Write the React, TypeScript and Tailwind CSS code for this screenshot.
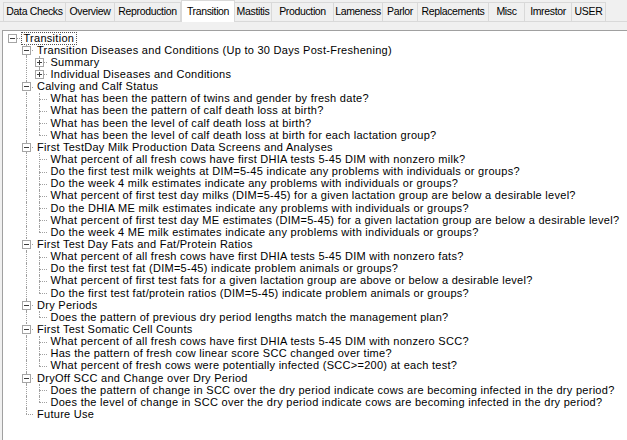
import React from "react";

type Node = {
  label: string;
  collapsed?: boolean;
  children?: Node[];
};

// tab label + measured width in the strip
const tabs: [string, string][] = [
  ["Data Checks", "w-[63px]"],
  ["Overview", "w-[49px]"],
  ["Reproduction", "w-[66px]"],
  ["Transition", "w-[54px]"],
  ["Mastitis", "w-[37px]"],
  ["Production", "w-[62px]"],
  ["Lameness", "w-[49px]"],
  ["Parlor", "w-[35px]"],
  ["Replacements", "w-[71px]"],
  ["Misc", "w-[36px]"],
  ["Imrestor", "w-[47px]"],
  ["USER", "w-[34px]"],
];

const tree: Node = {
  label: "Transition",
  children: [
    {
      label: "Transition Diseases and Conditions (Up to 30 Days Post-Freshening)",
      children: [
        { label: "Summary", collapsed: true, children: [] },
        { label: "Individual Diseases and Conditions", collapsed: true, children: [] },
      ],
    },
    {
      label: "Calving and Calf Status",
      children: [
        { label: "What has been the pattern of twins and gender by fresh date?" },
        { label: "What has been the pattern of calf death loss at birth?" },
        { label: "What has been the level of calf death loss at birth?" },
        { label: "What has been the level of calf death loss at birth for each lactation group?" },
      ],
    },
    {
      label: "First TestDay Milk Production Data Screens and Analyses",
      children: [
        { label: "What percent of all fresh cows have first DHIA tests 5-45 DIM with nonzero milk?" },
        { label: "Do the first test milk weights at DIM=5-45 indicate any problems with individuals or groups?" },
        { label: "Do the week 4 milk estimates indicate any problems with individuals or groups?" },
        { label: "What percent of first test day milks (DIM=5-45) for a given lactation group are below a desirable level?" },
        { label: "Do the DHIA ME milk estimates indicate any problems with individuals or groups?" },
        { label: "What percent of first test day ME estimates (DIM=5-45) for a given lactation group are below a desirable level?" },
        { label: "Do the week 4 ME milk estimates indicate any problems with individuals or groups?" },
      ],
    },
    {
      label: "First Test Day Fats and Fat/Protein Ratios",
      children: [
        { label: "What percent of all fresh cows have first DHIA tests 5-45 DIM with nonzero fats?" },
        { label: "Do the first test fat (DIM=5-45) indicate problem animals or groups?" },
        { label: "What percent of first test fats for a given lactation group are above or below a desirable level?" },
        { label: "Do the first test fat/protein ratios (DIM=5-45) indicate problem animals or groups?" },
      ],
    },
    {
      label: "Dry Periods",
      children: [
        { label: "Does the pattern of previous dry period lengths match the management plan?" },
      ],
    },
    {
      label: "First Test Somatic Cell Counts",
      children: [
        { label: "What percent of all fresh cows have first DHIA tests 5-45 DIM with nonzero SCC?" },
        { label: "Has the pattern of fresh cow linear score SCC changed over time?" },
        { label: "What percent of fresh cows were potentially infected (SCC>=200) at each test?" },
      ],
    },
    {
      label: "DryOff SCC and Change over Dry Period",
      children: [
        { label: "Does the pattern of change in SCC over the dry period indicate cows are becoming infected in the dry period?" },
        { label: "Does the level of change in SCC over the dry period indicate cows are becoming infected in the dry period?" },
      ],
    },
    { label: "Future Use" },
  ],
};

type Row = {
  node: Node;
  depth: number;
  last: boolean;
  guides: boolean[];
};

function flatten(node: Node, depth: number, last: boolean, guides: boolean[], out: Row[]) {
  out.push({ node, depth, last, guides });
  if (node.children && !node.collapsed) {
    node.children.forEach((c, i) =>
      flatten(c, depth + 1, i === node.children!.length - 1, [...guides, !last], out)
    );
  }
}

const rows: Row[] = [];
flatten(tree, 0, true, [], rows);

function Expander({ open }: { open: boolean }) {
  return (
    <span className="relative z-10 flex h-[9px] w-[9px] items-center justify-center border border-[#a5a5a5] bg-white">
      <span className="absolute h-px w-[5px] bg-[#3c3c3c]" />
      {!open && <span className="absolute h-[5px] w-px bg-[#3c3c3c]" />}
    </span>
  );
}

function TreeRow({ row }: { row: Row }) {
  const hasKids = !!row.node.children;
  const isRoot = row.depth === 0;
  return (
    <div className="flex h-[12.15px] items-center">
      {row.guides.map((g, i) => (
        <span key={i} className="relative flex h-full w-[13.5px] shrink-0 justify-center">
          {g && <span className="h-full border-l border-dotted border-[#a0a0a0]" />}
        </span>
      ))}
      <span className="relative flex h-full w-[13.5px] shrink-0 items-center justify-center">
        {!isRoot && (
          <span
            className={`absolute left-[6px] top-0 border-l border-dotted border-[#a0a0a0] ${
              row.last ? "h-1/2" : "h-full"
            }`}
          />
        )}
        <span className="absolute left-[6px] right-0 top-1/2 border-t border-dotted border-[#a0a0a0]" />
        {hasKids && <Expander open={!row.node.collapsed} />}
      </span>
      <span
        className={`ml-[1px] whitespace-nowrap px-[2px] leading-[11px] ${
          isRoot ? "border border-dotted border-[#555]" : "border border-transparent"
        }`}
      >
        {row.node.label}
      </span>
    </div>
  );
}

export default function App() {
  return (
    <div
      className="flex h-[440px] w-[627px] flex-col overflow-hidden bg-[#f0f0f0] text-[11px] text-black"
      style={{ fontFamily: '"Liberation Sans", Arial, sans-serif' }}
    >
      <div className="flex h-[21px] shrink-0 items-end pl-[3px] text-[10.5px] tracking-[-0.35px]">
        {tabs.map(([t, w]) => {
          const active = t === "Transition";
          return (
            <div
              key={t}
              className={`${w} shrink-0 ${
                active
                  ? "relative z-10 -mb-px flex h-[22px] items-start justify-center whitespace-nowrap border border-b-0 border-[#d9d9d9] bg-white pt-[3px]"
                  : "flex h-[19px] items-center justify-center whitespace-nowrap border border-l-0 border-b-0 border-[#d9d9d9] bg-[#f0f0f0] first:border-l"
              }`}
            >
              {t}
            </div>
          );
        })}
      </div>
      <div className="flex flex-1 flex-col border-t border-[#d9d9d9] pl-[2px] pt-[8px]">
        <div className="flex-1 border-t border-l border-[#a0a0a0] bg-white pl-[3px] pt-[1px] tracking-[0.28px]">
          {rows.map((r, i) => (
            <TreeRow key={i} row={r} />
          ))}
        </div>
      </div>
    </div>
  );
}
